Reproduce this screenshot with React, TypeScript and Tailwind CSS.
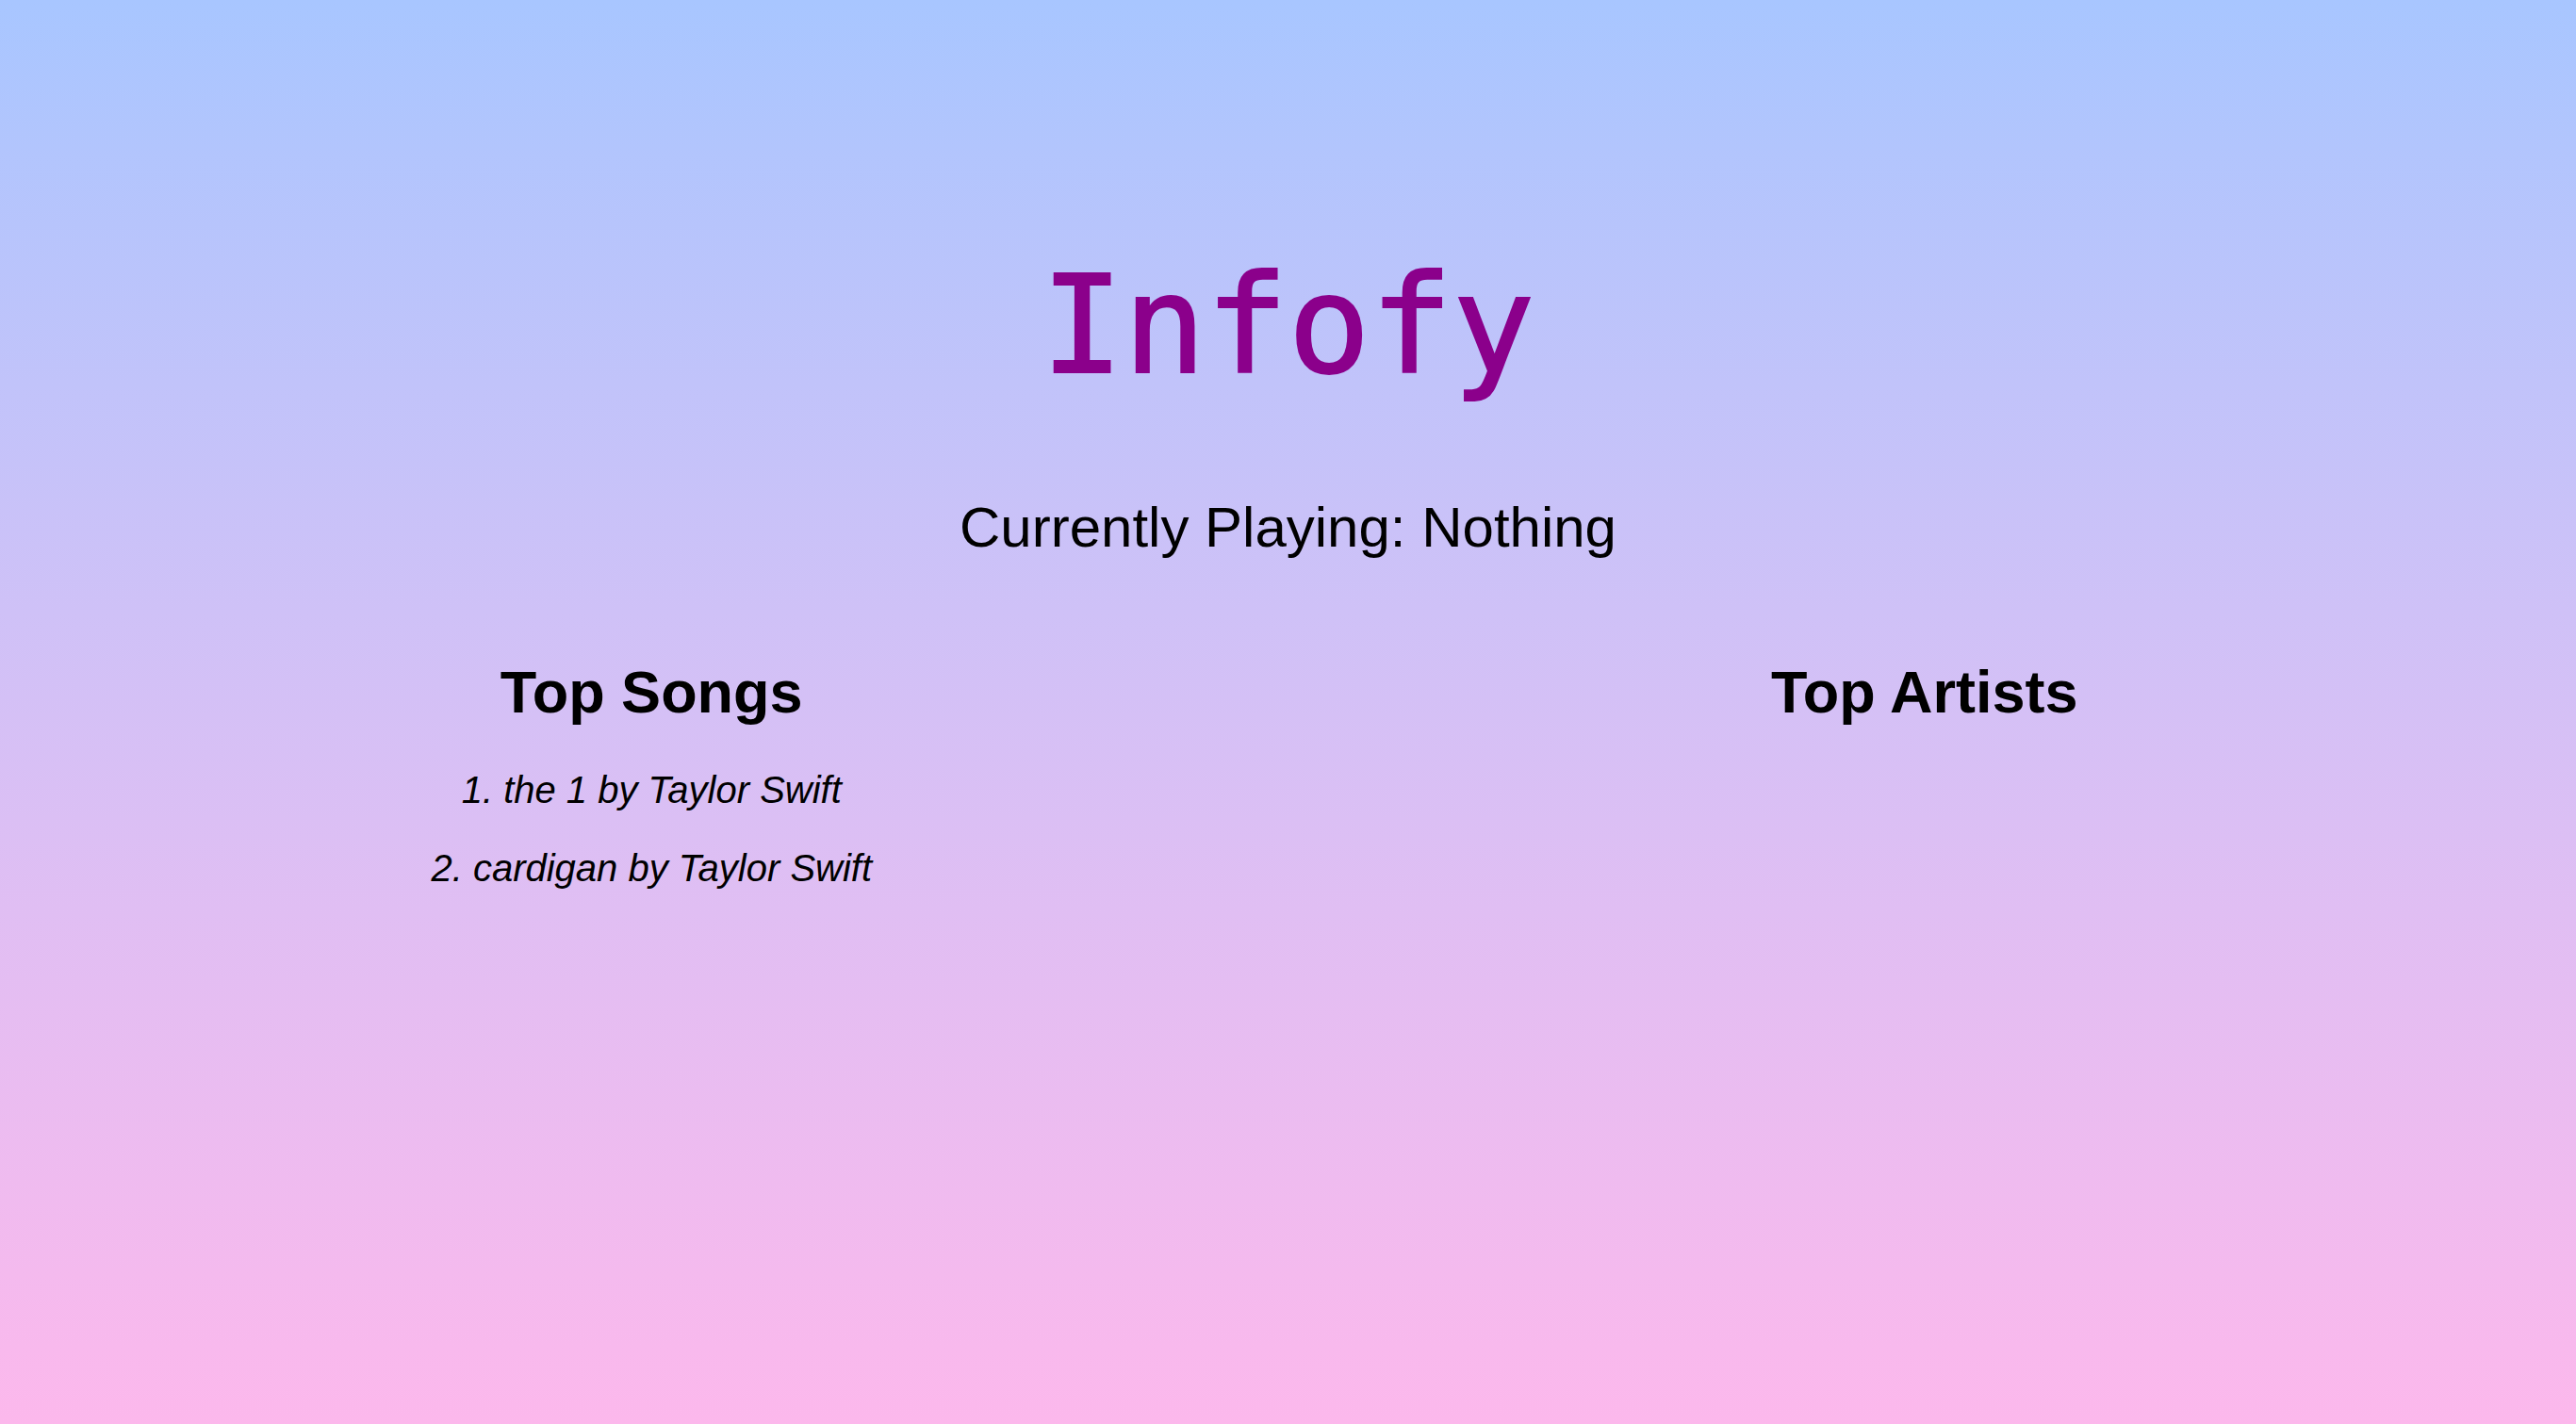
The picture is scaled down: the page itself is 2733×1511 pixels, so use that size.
export default function App() {
  const topSongs = [
    { name: "the 1", artist: "Taylor Swift" },
    { name: "cardigan", artist: "Taylor Swift" },
  ];

  return (
    <div className="min-h-screen w-full bg-gradient-to-b from-[#a8c6ff] to-[#fcb8ec] pt-[272px] text-center text-black font-['Liberation_Sans',Arial,sans-serif]">
      {/* Header */}
      <h1 className="text-[145px] leading-none font-normal text-[#8b008b] [-webkit-text-stroke:2px_#8b008b] font-['DejaVu_Sans_Mono',monospace]">
        Infofy
      </h1>
      <p className="mt-[113px] text-[60px] leading-none">Currently Playing: Nothing</p>

      {/* Top lists */}
      <div className="mt-[113px] grid grid-cols-2 px-4">
        <div>
          <h2 className="text-[63px] leading-none font-bold">Top Songs</h2>
          <ul className="mt-[52px] flex flex-col gap-[43px]">
            {topSongs.map((song, idx) => (
              <li key={song.name} className="text-[40px] leading-none italic">
                {idx + 1}. {song.name} by {song.artist}
              </li>
            ))}
          </ul>
        </div>
        <div>
          <h2 className="text-[63px] leading-none font-bold">Top Artists</h2>
        </div>
      </div>
    </div>
  );
}
